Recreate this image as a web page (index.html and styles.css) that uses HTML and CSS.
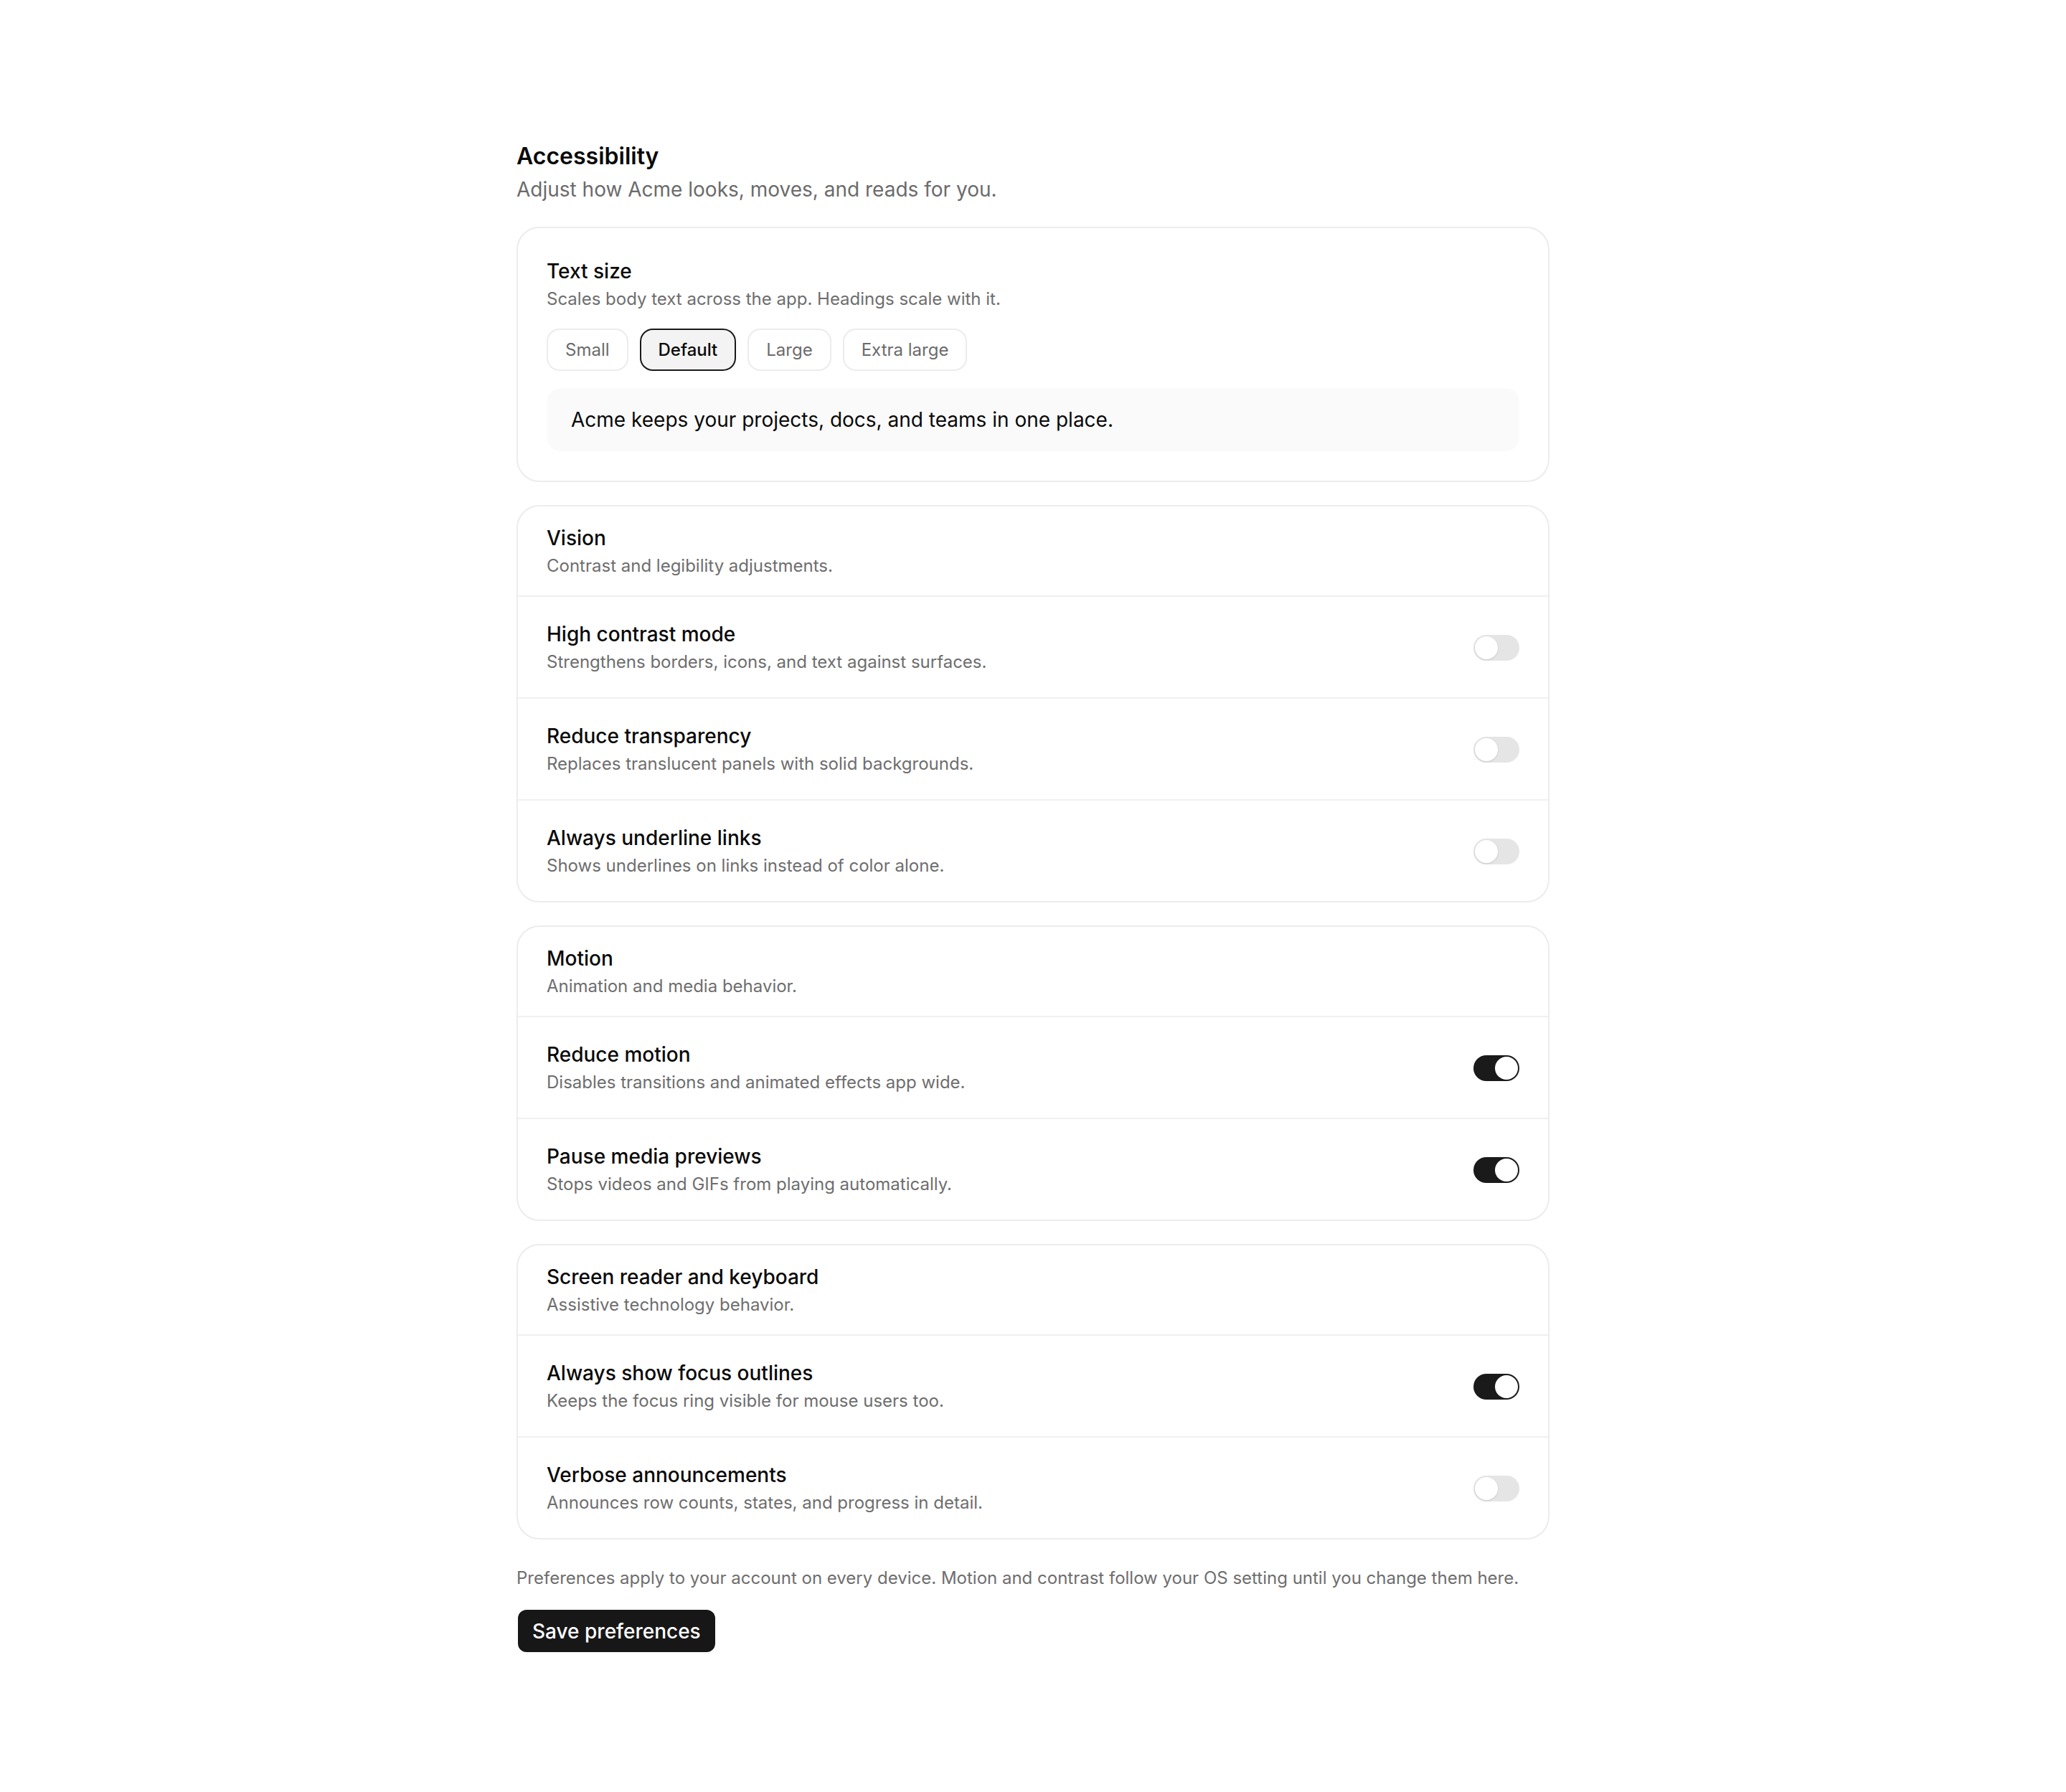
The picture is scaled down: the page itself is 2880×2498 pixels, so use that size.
FILE: index.html
```html
<!DOCTYPE html>
<html lang="en">
<head>
<meta charset="utf-8">
<title>Accessibility</title>
<link rel="stylesheet" href="styles.css">
</head>
<body>
<main class="page">
  <header class="page-head">
    <h1 class="page-title">Accessibility</h1>
    <p class="page-sub">Adjust how Acme looks, moves, and reads for you.</p>
  </header>

  <section class="card card-padded">
    <h2 class="item-title">Text size</h2>
    <p class="item-desc">Scales body text across the app. Headings scale with it.</p>
    <div class="pills">
      <button class="pill">Small</button>
      <button class="pill pill-active">Default</button>
      <button class="pill">Large</button>
      <button class="pill">Extra large</button>
    </div>
    <div class="preview">Acme keeps your projects, docs, and teams in one place.</div>
  </section>

  <section class="card">
    <div class="group-head">
      <h2 class="item-title">Vision</h2>
      <p class="item-desc">Contrast and legibility adjustments.</p>
    </div>
    <div class="row">
      <div class="row-text">
        <h3 class="item-title">High contrast mode</h3>
        <p class="item-desc">Strengthens borders, icons, and text against surfaces.</p>
      </div>
      <span class="toggle"></span>
    </div>
    <div class="row">
      <div class="row-text">
        <h3 class="item-title">Reduce transparency</h3>
        <p class="item-desc">Replaces translucent panels with solid backgrounds.</p>
      </div>
      <span class="toggle"></span>
    </div>
    <div class="row">
      <div class="row-text">
        <h3 class="item-title">Always underline links</h3>
        <p class="item-desc">Shows underlines on links instead of color alone.</p>
      </div>
      <span class="toggle"></span>
    </div>
  </section>

  <section class="card">
    <div class="group-head">
      <h2 class="item-title">Motion</h2>
      <p class="item-desc">Animation and media behavior.</p>
    </div>
    <div class="row">
      <div class="row-text">
        <h3 class="item-title">Reduce motion</h3>
        <p class="item-desc">Disables transitions and animated effects app wide.</p>
      </div>
      <span class="toggle toggle-on"></span>
    </div>
    <div class="row">
      <div class="row-text">
        <h3 class="item-title">Pause media previews</h3>
        <p class="item-desc">Stops videos and GIFs from playing automatically.</p>
      </div>
      <span class="toggle toggle-on"></span>
    </div>
  </section>

  <section class="card">
    <div class="group-head">
      <h2 class="item-title">Screen reader and keyboard</h2>
      <p class="item-desc">Assistive technology behavior.</p>
    </div>
    <div class="row">
      <div class="row-text">
        <h3 class="item-title">Always show focus outlines</h3>
        <p class="item-desc">Keeps the focus ring visible for mouse users too.</p>
      </div>
      <span class="toggle toggle-on"></span>
    </div>
    <div class="row">
      <div class="row-text">
        <h3 class="item-title">Verbose announcements</h3>
        <p class="item-desc">Announces row counts, states, and progress in detail.</p>
      </div>
      <span class="toggle"></span>
    </div>
  </section>

  <footer class="page-foot">
    <p class="footnote">Preferences apply to your account on every device. Motion and contrast follow your OS setting until you change them here.</p>
    <button class="save">Save preferences</button>
  </footer>
</main>
</body>
</html>
```

FILE: styles.css
```css
* { box-sizing: border-box; }

html, body {
  margin: 0;
  padding: 0;
  background: #ffffff;
}

body {
  font-family: Inter, "Noto Sans", "Liberation Sans", sans-serif;
  color: #0a0a0a;
}

h1, h2, h3, p { margin: 0; }

.page {
  width: 1440px;
  margin: 0 auto;
  padding: 198px 0 160px;
  display: flex;
  flex-direction: column;
  gap: 32px;
}

.page-head {
  display: flex;
  flex-direction: column;
  gap: 6px;
}

.page-title {
  font-size: 32px;
  line-height: 40px;
  font-weight: 600;
  color: #0a0a0a;
}

.page-sub {
  font-size: 28px;
  line-height: 40px;
  font-weight: 400;
  color: #6b6b6b;
}

.card {
  border: 2px solid #ececec;
  border-radius: 32px;
  background: #ffffff;
}

.card-padded {
  padding: 40px 40px 41px;
}

.item-title {
  font-size: 28px;
  line-height: 40px;
  font-weight: 500;
  color: #0a0a0a;
}

.item-desc {
  font-size: 24px;
  line-height: 36px;
  padding-top: 1px;
  font-weight: 400;
  color: #6e6e6e;
}

.pills {
  display: flex;
  gap: 16px;
  margin-top: 23px;
}

.pill {
  font-family: inherit;
  font-size: 24px;
  line-height: 35px;
  font-weight: 400;
  color: #6b6b6b;
  background: #ffffff;
  border: 2px solid #ececec;
  border-radius: 18px;
  padding: 10px 24px;
  margin: 0;
  cursor: pointer;
}

.pill-active {
  color: #0a0a0a;
  font-weight: 500;
  background: #f3f3f3;
  border-color: #1a1a1a;
}

.preview {
  margin-top: 24px;
  background: #fafafa;
  border-radius: 20px;
  padding: 24px 34px;
  font-size: 28px;
  line-height: 40px;
  color: #0a0a0a;
}

.group-head {
  padding: 24px 40px 23px;
}

.row {
  display: flex;
  align-items: center;
  justify-content: space-between;
  gap: 40px;
  padding: 32px 40px 31px;
  border-top: 2px solid #f0f0f0;
}

.toggle {
  position: relative;
  flex: none;
  width: 64px;
  height: 36px;
  border-radius: 18px;
  background: #e5e5e5;
}

.toggle::after {
  content: "";
  position: absolute;
  top: 2px;
  left: 2px;
  width: 32px;
  height: 32px;
  border-radius: 50%;
  background: #ffffff;
  box-shadow: 0 1px 3px rgba(0, 0, 0, 0.12);
}

.toggle-on {
  background: #1a1a1a;
}

.toggle-on::after {
  left: 30px;
  box-shadow: none;
}

.page-foot {
  display: flex;
  flex-direction: column;
  align-items: flex-start;
  gap: 24px;
  margin-top: 2px;
}

.footnote {
  font-size: 24px;
  line-height: 40px;
  color: #6e6e6e;
}

.save {
  font-family: inherit;
  font-size: 28px;
  line-height: 40px;
  font-weight: 500;
  color: #ffffff;
  background: #171717;
  border: none;
  border-radius: 12px;
  padding: 10px 20px 9px;
  margin: 0 0 0 2px;
  cursor: pointer;
}
```
